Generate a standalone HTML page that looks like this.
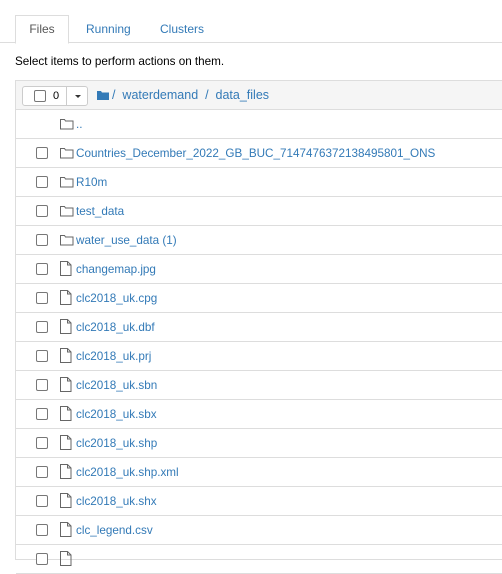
<!DOCTYPE html><html><head><style>
html,body{margin:0;width:502px;height:552px;overflow:hidden;background:#fff;font-family:"Liberation Sans",sans-serif;font-size:12px;color:#000}
.tabs{position:absolute;top:0;left:0;width:502px;height:43px;border-bottom:1px solid #ddd;box-sizing:border-box}
.tab{position:absolute;top:15px;height:28px;line-height:29px;color:#337ab7;font-size:12px}
.t1{left:15px;width:54px;border:1px solid #ddd;border-bottom:1px solid #fff;box-sizing:border-box;background:#fff;color:#555;text-align:center;height:29px;line-height:27px}
.sel{position:absolute;top:55px;left:15px;font-size:11.7px}
.panel{position:absolute;top:80px;left:15px;width:500px;height:480px;border:1px solid #ddd;box-sizing:border-box}
.hdr{height:29px;background:#f5f5f5;border-bottom:1px solid #ddd;box-sizing:border-box;position:relative}
.btn{position:absolute;left:6px;top:5px;width:66px;height:20px;border:1px solid #ccc;border-radius:3px;background:#fff;box-sizing:border-box}
.btn .cb{position:absolute;left:11px;top:3px}
.btn .n{position:absolute;left:30px;top:3px;font-size:11px}
.btn .d{position:absolute;left:43px;top:0;width:1px;height:18px;background:#ccc}
.btn .car{position:absolute;left:52px;top:8px;border-left:3px solid transparent;border-right:3px solid transparent;border-top:3px solid #333}
.bc{position:absolute;top:7px;color:#337ab7;font-size:12.5px}
.row{height:29px;border-bottom:1px solid #ddd;box-sizing:border-box;position:relative}
.cb{position:absolute;width:10px;height:10px;border:1px solid #777;border-radius:2px;background:#fff}
.row .cb{left:20px;top:8px}
.row svg{position:absolute;left:44px;top:8px}
.row span{position:absolute;left:60px;top:8px;color:#337ab7;font-size:11.7px}
</style></head><body>
<div class="tabs"></div>
<div class="tab t1">Files</div>
<div class="tab" style="left:86px">Running</div>
<div class="tab" style="left:160px">Clusters</div>
<div class="sel">Select items to perform actions on them.</div>
<div class="panel">
<div class="hdr"><div class="btn"><div class="cb"></div><div class="n">0</div><div class="d"></div><div class="car"></div></div>
<svg style="position:absolute;left:81px;top:9px" width="12" height="10"><path d="M0 1h4l1 1.5h7V10H0z" fill="#337ab7"/></svg>
<div class="bc" style="left:96px">/&nbsp;&nbsp;waterdemand&nbsp;&nbsp;/&nbsp;&nbsp;data_files</div></div>
<div class="row"><svg width="14" height="12"><path d="M.5 1.5h4l1 1.5h7.5v8H.5z" fill="none" stroke="#666"/></svg><span>..</span></div>
<div class="row"><div class="cb"></div><svg width="14" height="12"><path d="M.5 1.5h4l1 1.5h7.5v8H.5z" fill="none" stroke="#666"/></svg><span>Countries_December_2022_GB_BUC_7147476372138495801_ONS</span></div>
<div class="row"><div class="cb"></div><svg width="14" height="12"><path d="M.5 1.5h4l1 1.5h7.5v8H.5z" fill="none" stroke="#666"/></svg><span>R10m</span></div>
<div class="row"><div class="cb"></div><svg width="14" height="12"><path d="M.5 1.5h4l1 1.5h7.5v8H.5z" fill="none" stroke="#666"/></svg><span>test_data</span></div>
<div class="row"><div class="cb"></div><svg width="14" height="12"><path d="M.5 1.5h4l1 1.5h7.5v8H.5z" fill="none" stroke="#666"/></svg><span>water_use_data (1)</span></div>
<div class="row"><div class="cb"></div><svg width="12" height="15" style="top:6px"><path d="M.5 .5h7l3.5 3.5v10.5H.5zM7.5.5v3.5h3.5" fill="none" stroke="#666"/></svg><span>changemap.jpg</span></div>
<div class="row"><div class="cb"></div><svg width="12" height="15" style="top:6px"><path d="M.5 .5h7l3.5 3.5v10.5H.5zM7.5.5v3.5h3.5" fill="none" stroke="#666"/></svg><span>clc2018_uk.cpg</span></div>
<div class="row"><div class="cb"></div><svg width="12" height="15" style="top:6px"><path d="M.5 .5h7l3.5 3.5v10.5H.5zM7.5.5v3.5h3.5" fill="none" stroke="#666"/></svg><span>clc2018_uk.dbf</span></div>
<div class="row"><div class="cb"></div><svg width="12" height="15" style="top:6px"><path d="M.5 .5h7l3.5 3.5v10.5H.5zM7.5.5v3.5h3.5" fill="none" stroke="#666"/></svg><span>clc2018_uk.prj</span></div>
<div class="row"><div class="cb"></div><svg width="12" height="15" style="top:6px"><path d="M.5 .5h7l3.5 3.5v10.5H.5zM7.5.5v3.5h3.5" fill="none" stroke="#666"/></svg><span>clc2018_uk.sbn</span></div>
<div class="row"><div class="cb"></div><svg width="12" height="15" style="top:6px"><path d="M.5 .5h7l3.5 3.5v10.5H.5zM7.5.5v3.5h3.5" fill="none" stroke="#666"/></svg><span>clc2018_uk.sbx</span></div>
<div class="row"><div class="cb"></div><svg width="12" height="15" style="top:6px"><path d="M.5 .5h7l3.5 3.5v10.5H.5zM7.5.5v3.5h3.5" fill="none" stroke="#666"/></svg><span>clc2018_uk.shp</span></div>
<div class="row"><div class="cb"></div><svg width="12" height="15" style="top:6px"><path d="M.5 .5h7l3.5 3.5v10.5H.5zM7.5.5v3.5h3.5" fill="none" stroke="#666"/></svg><span>clc2018_uk.shp.xml</span></div>
<div class="row"><div class="cb"></div><svg width="12" height="15" style="top:6px"><path d="M.5 .5h7l3.5 3.5v10.5H.5zM7.5.5v3.5h3.5" fill="none" stroke="#666"/></svg><span>clc2018_uk.shx</span></div>
<div class="row"><div class="cb"></div><svg width="12" height="15" style="top:6px"><path d="M.5 .5h7l3.5 3.5v10.5H.5zM7.5.5v3.5h3.5" fill="none" stroke="#666"/></svg><span>clc_legend.csv</span></div>
<div class="row"><div class="cb"></div><svg width="12" height="15" style="top:6px"><path d="M.5 .5h7l3.5 3.5v10.5H.5zM7.5.5v3.5h3.5" fill="none" stroke="#666"/></svg><span></span></div>
</div>
</body></html>
